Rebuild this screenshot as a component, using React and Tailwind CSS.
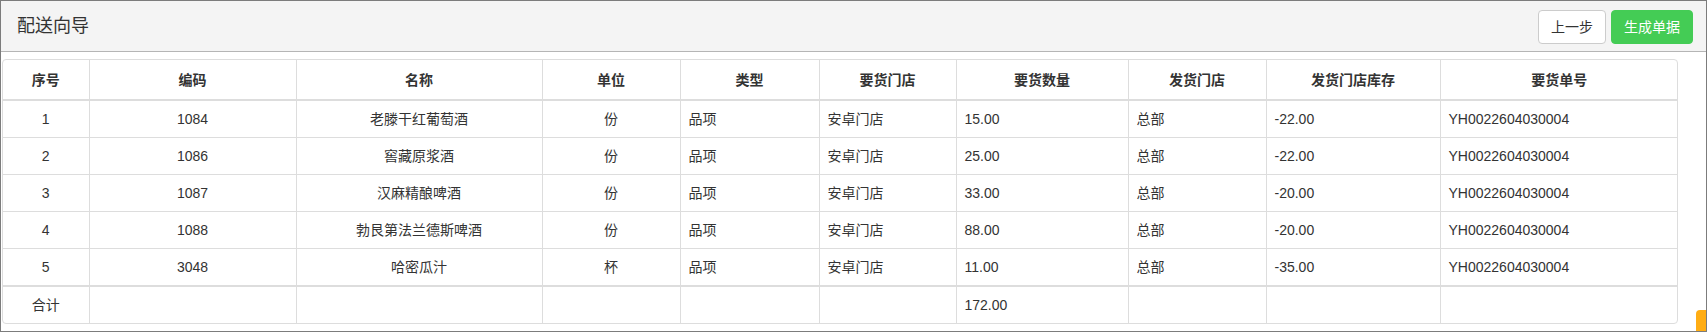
import React from 'react';

const columns = [
    { title: '序号', width: 'w-[86px]', center: true },
    { title: '编码', width: 'w-[207px]', center: true },
    { title: '名称', width: 'w-[246px]', center: true },
    { title: '单位', width: 'w-[138px]', center: true },
    { title: '类型', width: 'w-[139px]' },
    { title: '要货门店', width: 'w-[137px]' },
    { title: '要货数量', width: 'w-[172px]' },
    { title: '发货门店', width: 'w-[138px]' },
    { title: '发货门店库存', width: 'w-[174px]' },
    { title: '要货单号', width: 'w-[238px]' },
];

const rows = [
    ['1', '1084', '老滕干红葡萄酒', '份', '品项', '安卓门店', '15.00', '总部', '-22.00', 'YH0022604030004'],
    ['2', '1086', '窖藏原浆酒', '份', '品项', '安卓门店', '25.00', '总部', '-22.00', 'YH0022604030004'],
    ['3', '1087', '汉麻精酿啤酒', '份', '品项', '安卓门店', '33.00', '总部', '-20.00', 'YH0022604030004'],
    ['4', '1088', '勃艮第法兰德斯啤酒', '份', '品项', '安卓门店', '88.00', '总部', '-20.00', 'YH0022604030004'],
    ['5', '3048', '哈密瓜汁', '杯', '品项', '安卓门店', '11.00', '总部', '-35.00', 'YH0022604030004'],
];

const footer = ['合计', '', '', '', '', '', '172.00', '', '', ''];

const font = { fontFamily: '"Liberation Sans", "Noto Sans CJK SC", sans-serif' };

const App = () => {
    return (
        <div
            className="relative h-[332px] w-full overflow-hidden border border-[#7c7c7c] bg-white text-[#333]"
            style={font}
        >
            {/* Cabecera */}
            <div className="flex h-[51px] items-center justify-between border-b border-[#b5b5b5] bg-[#f4f4f4] pl-4 pr-[13px]">
                <span className="text-[18px] leading-6 text-[#333]">配送向导</span>
                <div className="flex gap-[5px] pt-px">
                    <button className="rounded-[4px] border border-[#ccc] bg-white px-3 py-[6px] text-[14px] leading-5 text-[#333]">
                        上一步
                    </button>
                    <button className="rounded-[4px] border border-[#44cc55] bg-[#44cc55] px-3 py-[6px] text-[14px] leading-5 text-white">
                        生成单据
                    </button>
                </div>
            </div>

            {/* Tabla */}
            <div className="ml-px mt-[7px] w-[1676px] overflow-hidden rounded-[4px] border border-[#ddd]">
                <table className="w-full table-fixed border-collapse text-[14px] leading-5">
                    <thead>
                        <tr className="border-b-2 border-[#ddd]">
                            {columns.map(col => (
                                <th
                                    key={col.title}
                                    className={`${col.width} border-l border-[#ddd] px-2 pt-[10px] pb-[9px] text-center font-bold first:border-l-0`}
                                >
                                    {col.title}
                                </th>
                            ))}
                        </tr>
                    </thead>
                    <tbody>
                        {rows.map((row, i) => (
                            <tr key={i} className="border-b border-[#ddd] last:border-b-0">
                                {row.map((cell, j) => (
                                    <td
                                        key={j}
                                        className={`border-l border-[#ddd] px-2 py-2 first:border-l-0 ${columns[j].center ? 'text-center' : 'text-left'}`}
                                    >
                                        {cell}
                                    </td>
                                ))}
                            </tr>
                        ))}
                    </tbody>
                    <tfoot>
                        <tr className="border-t-2 border-[#ddd]">
                            {footer.map((cell, j) => (
                                <td
                                    key={j}
                                    className={`h-[36px] border-l border-[#ddd] px-2 py-2 first:border-l-0 ${j === 0 ? 'text-center' : 'text-left'}`}
                                >
                                    {cell}
                                </td>
                            ))}
                        </tr>
                    </tfoot>
                </table>
            </div>

            {/* Botón flotante recortado */}
            <div className="absolute bottom-0 right-0 h-[21px] w-[10px] rounded-tl-[4px] bg-[#ffad14]" />
        </div>
    );
};

export default App;
